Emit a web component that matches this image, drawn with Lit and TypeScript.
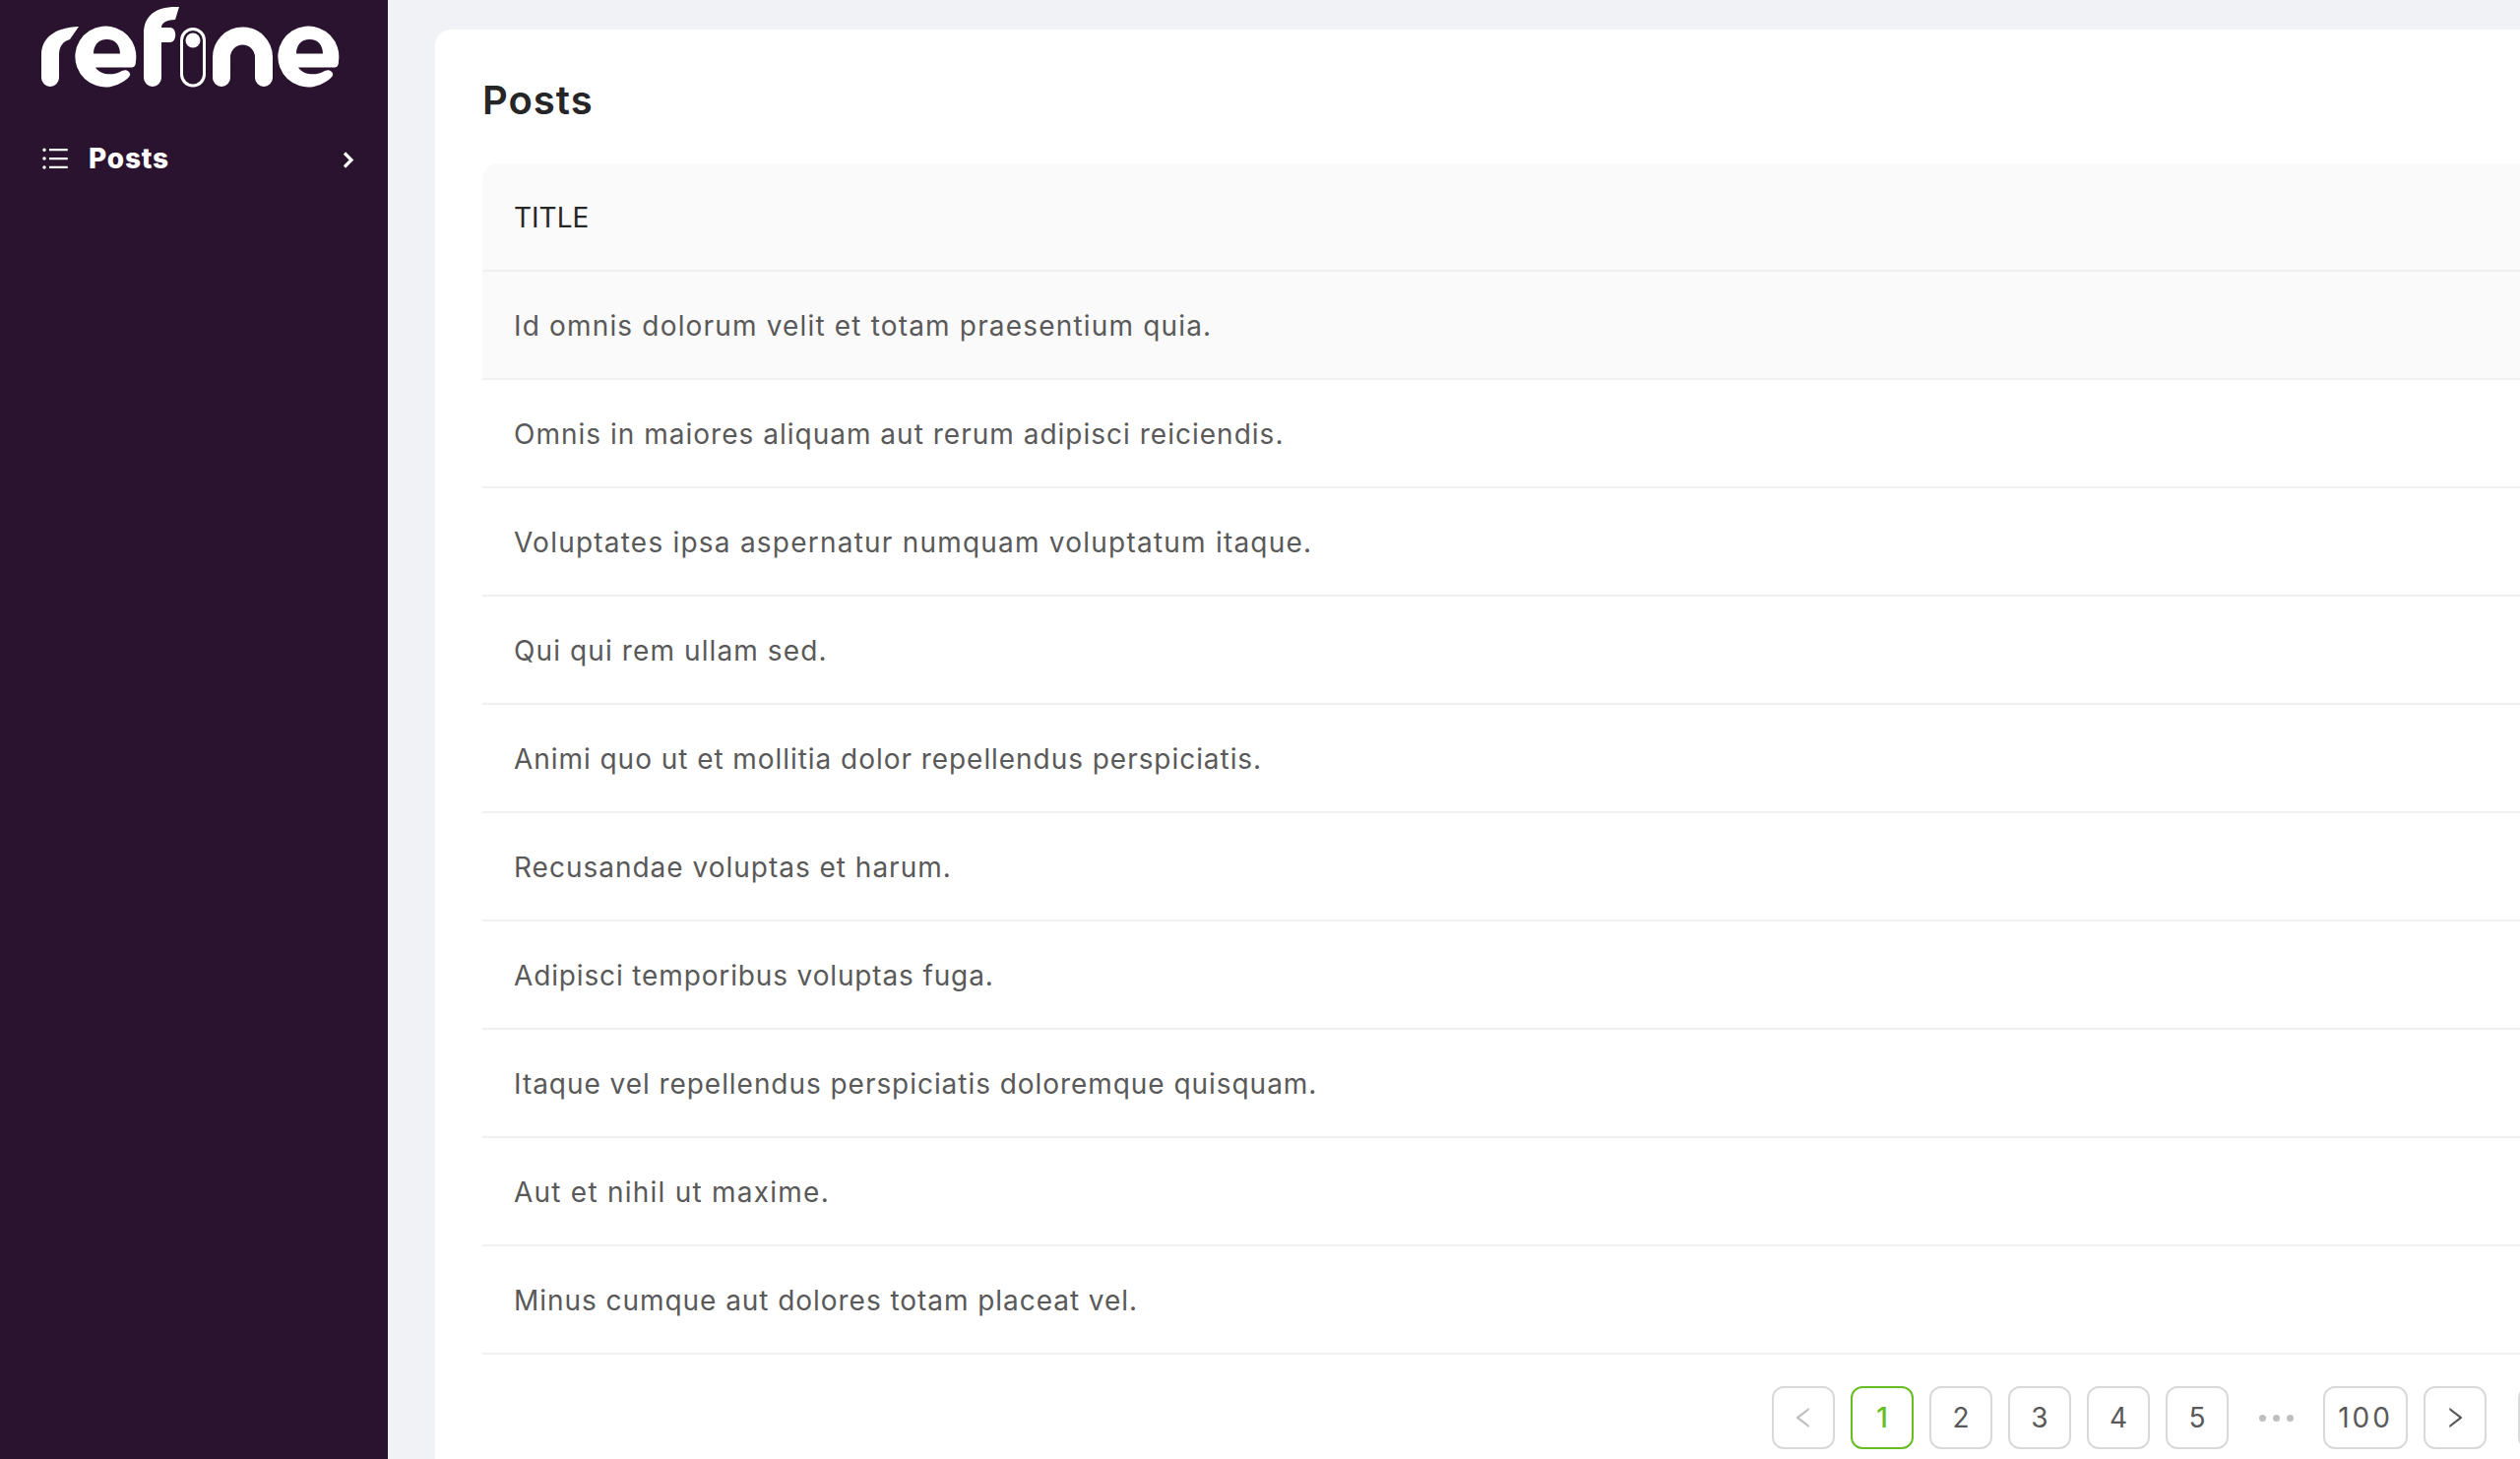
import { LitElement, html, css, svg } from "lit";
import { customElement } from "lit/decorators.js";

// Each title with the letter tracking that brings Inter to the width of the original typeface.
const POSTS: [string, number][] = [
  ["Id omnis dolorum velit et totam praesentium quia.", 1.17],
  ["Omnis in maiores aliquam aut rerum adipisci reiciendis.", 1.01],
  ["Voluptates ipsa aspernatur numquam voluptatum itaque.", 1.22],
  ["Qui qui rem ullam sed.", 1.1],
  ["Animi quo ut et mollitia dolor repellendus perspiciatis.", 0.95],
  ["Recusandae voluptas et harum.", 0.99],
  ["Adipisci temporibus voluptas fuga.", 0.86],
  ["Itaque vel repellendus perspiciatis doloremque quisquam.", 0.95],
  ["Aut et nihil ut maxime.", 1.24],
  ["Minus cumque aut dolores totam placeat vel.", 0.95],
];

const RIGHT = "M765.7 486.8L314.9 134.7A7.97 7.97 0 00302 141v77.3c0 4.9 2.3 9.6 6.1 12.6l360 281.1-360 281.1c-3.9 3-6.1 7.7-6.1 12.6V883c0 6.7 7.7 10.4 12.9 6.3l450.8-352.1a31.96 31.96 0 000-50.4z";
const LEFT = "M724 218.3V141c0-6.7-7.7-10.4-12.9-6.3L260.3 486.8a31.86 31.86 0 000 50.3l450.8 352.1c5.3 4.1 12.9.4 12.9-6.3v-77.3c0-4.9-2.3-9.6-6.1-12.6l-360-281 360-281.1c3.8-3 6.1-7.7 6.1-12.6z";
const LIST = "M912 192H328c-4.4 0-8 3.6-8 8v56c0 4.4 3.6 8 8 8h584c4.4 0 8-3.6 8-8v-56c0-4.4-3.6-8-8-8zm0 284H328c-4.4 0-8 3.6-8 8v56c0 4.4 3.6 8 8 8h584c4.4 0 8-3.6 8-8v-56c0-4.4-3.6-8-8-8zm0 284H328c-4.4 0-8 3.6-8 8v56c0 4.4 3.6 8 8 8h584c4.4 0 8-3.6 8-8v-56c0-4.4-3.6-8-8-8zM104 228a56 56 0 10112 0 56 56 0 10-112 0zm0 284a56 56 0 10112 0 56 56 0 10-112 0zm0 284a56 56 0 10112 0 56 56 0 10-112 0z";

const antIcon = (d: string, cls: string) => html`<svg class=${cls} viewBox="64 64 896 896" fill="currentColor">${svg`<path d=${d}></path>`}</svg>`;

const E_PATH = "M134 68.5 Q138 68.5 138 62 A31 31 0 1 0 125 83 C131 79 134 76 131 73 C128 70 125 71.5 122 73 C114 77 102 76 97 68.5 Z M95 54.5 C95 46 100 40 108.5 40 C117 40 122 46 122 54.5 Z";

const logo = html`<svg class="logo" viewBox="0 0 394 100" width="394" height="100">
  ${svg`
  <path fill="#fff" d="M42 79 V56 C42 38 56 28 80 27 L71 40 C64 42 60 47 60 56 V79 a9 9 0 0 1 -18 0 Z"></path>
  <path fill="#fff" fill-rule="evenodd" d=${E_PATH}></path>
  <path fill="#fff" d="M146 79 V34 C146 16 158 6 182 7 L178 20 C168 20 164 24 164 28 H173 C180 28 180 43 173 43 H164 V79 a9 9 0 0 1 -18 0 Z"></path>
  <rect x="184.5" y="29.5" width="23" height="57.5" rx="11.5" fill="none" stroke="#fff" stroke-width="3"></rect>
  <circle cx="196" cy="41" r="7.5" fill="#fff"></circle>
  <path d="M225 79 V58 a21.5 21.5 0 0 1 43 0 V79" fill="none" stroke="#fff" stroke-width="18" stroke-linecap="round"></path>
  <path fill="#fff" fill-rule="evenodd" transform="translate(206 0)" d=${E_PATH}></path>
  `}
</svg>`;

@customElement("app-root")
export class AppRoot extends LitElement {
  static styles = css`
    :host {
      display: block;
      height: 1482px;
      overflow: hidden;
      font-family: Inter, "Liberation Sans", sans-serif;
    }
    .shell {
      display: flex;
      height: 1482px;
      background: #f0f2f5;
    }
    .sider {
      flex: 0 0 394px;
      background: #2a132e;
      color: #fff;
    }
    .logo {
      display: block;
    }
    .menu-item {
      display: flex;
      align-items: center;
      height: 80px;
      margin-top: 21px;
      padding: 0 34px 0 42px;
    }
    .menu-icon {
      width: 28px;
      height: 28px;
      flex: none;
    }
    .menu-label {
      flex: 1;
      margin-left: 20px;
      font-size: 28px;
      font-weight: 800;
      letter-spacing: 0.8px;
    }
    .menu-arrow {
      width: 12px;
      height: 20px;
      flex: none;
    }
    .main {
      flex: 1;
      min-width: 0;
      overflow: hidden;
      padding: 30px 0 0 48px;
    }
    .card {
      width: 2344px;
      height: 1600px;
      box-sizing: border-box;
      padding: 48px 48px 0;
      background: #fff;
      border-radius: 16px;
    }
    h4 {
      margin: 0;
      height: 88px;
      font-size: 40px;
      line-height: 48px;
      font-weight: 600;
      letter-spacing: 1px;
      color: #262626;
    }
    .row {
      display: flex;
      align-items: center;
      box-sizing: border-box;
      height: 110px;
      padding: 1px 32px 0;
      border-bottom: 2px solid #f0f0f0;
      font-size: 28px;
      color: #595959;
    }
    .head {
      border-radius: 16px 16px 0 0;
      background: #fafafa;
      color: #262626;
      font-weight: 400;
    }
    .hover {
      background: #fafafa;
    }
    .pager {
      display: flex;
      justify-content: flex-end;
      gap: 16px;
      margin-top: 32px;
    }
    .pg {
      display: flex;
      align-items: center;
      justify-content: center;
      box-sizing: border-box;
      min-width: 64px;
      height: 64px;
      padding: 0 12px;
      border: 2px solid #d9d9d9;
      border-radius: 12px;
      background: #fff;
      color: #595959;
      font-size: 28px;
    }
    .pg.active {
      border-color: #67be23;
      color: #67be23;
      font-weight: 500;
    }
    .pg.disabled {
      color: #bfbfbf;
    }
    .pg.wide {
      width: 86px;
      letter-spacing: 3px;
    }
    .pg svg {
      width: 24px;
      height: 24px;
    }
    .dots {
      display: flex;
      align-items: center;
      justify-content: center;
      gap: 7px;
      width: 64px;
      height: 64px;
    }
    .dots i {
      width: 7px;
      height: 7px;
      border-radius: 50%;
      background: #bfbfbf;
    }
    .size {
      width: 180px;
      height: 64px;
      margin-left: 16px;
      box-sizing: border-box;
      border: 2px solid #d9d9d9;
      border-radius: 12px;
    }
  `;

  render() {
    return html`<div class="shell">
      <aside class="sider">
        ${logo}
        <div class="menu-item">
          ${antIcon(LIST, "menu-icon")}
          <span class="menu-label">Posts</span>
          <svg class="menu-arrow" viewBox="0 0 12 20" fill="none" stroke="#fff" stroke-width="3.2"><path d="M2 4.5 L9 11.5 L2 18.5"></path></svg>
        </div>
      </aside>
      <main class="main">
        <section class="card">
          <h4>Posts</h4>
          <div class="row head">TITLE</div>
          ${POSTS.map(([text, track], i) => html`<div class="row ${i === 0 ? "hover" : ""}" style="letter-spacing:${track}px">${text}</div>`)}
          <nav class="pager">
            <div class="pg disabled">${antIcon(LEFT, "")}</div>
            ${["1", "2", "3", "4", "5"].map((n) => html`<div class="pg ${n === "1" ? "active" : ""}">${n}</div>`)}
            <div class="dots"><i></i><i></i><i></i></div>
            <div class="pg wide">100</div>
            <div class="pg">${antIcon(RIGHT, "")}</div>
            <div class="size"></div>
          </nav>
        </section>
      </main>
    </div>`;
  }
}
